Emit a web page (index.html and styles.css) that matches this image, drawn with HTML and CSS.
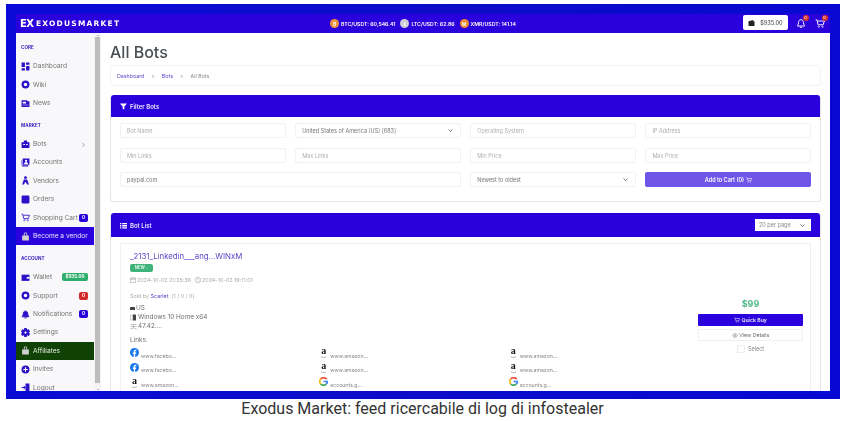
FILE: index.html
```html
<!DOCTYPE html>
<html lang="it">
<head>
  <meta charset="UTF-8" />
  <meta name="viewport" content="width=device-width, initial-scale=1.0"/>
  <title>Exodus Market</title>
  <link rel="stylesheet" href="styles.css">
</head>
<body>
  <svg class="sprite" width="0" height="0">
    <symbol id="cart" viewBox="0 0 16 16"><path d="M1 2h2l2 8h8l2-6H4" fill="none" stroke="currentColor" stroke-width="1.5"/><circle cx="6" cy="13" r="1.2" fill="none" stroke="currentColor"/><circle cx="12" cy="13" r="1.2" fill="none" stroke="currentColor"/></symbol>
    <symbol id="fb" viewBox="0 0 16 16"><circle cx="8" cy="8" r="8" fill="#1877f2"/><path d="M6.700 16v-5.500H5V8h1.700V6.300C6.700 4.300 7.900 3 9.800 3c.6 0 1.200.1 1.500.2v2.100h-1c-.9 0-1.200.5-1.200 1.100V8h2.100l-.4 2.500H9.100V16z" fill="#fff"/></symbol>
    <symbol id="goog" viewBox="0 0 16 16" fill="none" stroke-width="3"><path d="M13.500 4A7 7 0 0 0 3 3.500" stroke="#ea4335"/><path d="M3 3.500a7 7 0 0 0 0 9" stroke="#fbbc05"/><path d="M3 12.500a7 7 0 0 0 10 0" stroke="#34a853"/><path d="M13 12.500A7 7 0 0 0 15 8H8" stroke="#4285f4"/></symbol>
    <symbol id="amz" viewBox="0 0 16 16"><path d="M2 13c4 2.500 8 2.500 12 0" fill="none" stroke="#888" stroke-width="1.500"/></symbol>
  </svg>

  <div class="frame">
    <div class="app">
      <header class="topbar">
        <div class="logo"><span class="logo-mark">EX</span><span class="logo-text">EXODUSMARKET</span></div>
        <div class="ticker">
          <span class="coin coin-btc">₿</span><span>BTC/USDT: 60,546.41</span>
          <span class="coin coin-ltc">Ł</span><span>LTC/USDT: 62.86</span>
          <span class="coin coin-xmr">M</span><span>XMR/USDT: 141.14</span>
        </div>
        <div class="top-actions">
          <div class="balance">
            <svg width="7" height="6" viewBox="0 0 16 14"><path d="M1 3l11-3v3h3v11H1z" fill="#222"/></svg>
            <span>$935.00</span>
          </div>
          <div class="top-icon">
            <svg width="10" height="11" viewBox="0 0 16 16" fill="none" stroke="#fff" stroke-width="1.5"><path d="M8 2c-3 0-4 2-4 5 0 3-2 4-2 5h12c0-1-2-2-2-5 0-3-1-5-4-5zM6 14h4"/></svg>
            <span class="dot">0</span>
          </div>
          <div class="top-icon">
            <svg width="10" height="11"><use href="#cart"/></svg>
            <span class="dot">0</span>
          </div>
        </div>
      </header>

      <div class="body-row">
        <aside class="sidebar">
          <div class="side-label side-label-first">CORE</div>
          <a class="side-item"><svg class="ico" viewBox="0 0 16 16"><path d="M1 1h6v8H1zM9 1h6v4H9zM9 7h6v8H9zM1 11h6v4H1z"/></svg>Dashboard</a>
          <a class="side-item"><svg class="ico" viewBox="0 0 16 16"><circle cx="8" cy="8" r="7"/><circle cx="8" cy="8" r="3" fill="#fff"/></svg>Wiki</a>
          <a class="side-item"><svg class="ico" viewBox="0 0 16 16"><path d="M1 2h10v2h4v10H1z"/><path d="M3 5h6v3H3zM3 10h10v1H3z" fill="#fff"/></svg>News</a>

          <div class="side-label">MARKET</div>
          <a class="side-item"><svg class="ico" viewBox="0 0 16 16"><path d="M1 4h14v10H1zM5 1h6v3H5z"/><path d="M4 7h3v2H4zM9 7h3v2H9z" fill="#fff"/></svg>Bots<span class="chev">›</span></a>
          <a class="side-item"><svg class="ico" viewBox="0 0 16 16"><path d="M3 1h12v11H3zM1 4h1v11h11v-2H1z"/><circle cx="9" cy="5" r="2" fill="#fff"/><path d="M5.500 11c0-5 7-5 7 0z" fill="#fff"/></svg>Accounts</a>
          <a class="side-item"><svg class="ico" viewBox="0 0 16 16"><circle cx="8" cy="3" r="2.500"/><path d="M5 6h6l3 9h-3l-3-5-3 5H2z"/></svg>Vendors</a>
          <a class="side-item"><svg class="ico" viewBox="0 0 16 16"><rect x="1" y="1" width="14" height="14" rx="2"/></svg>Orders</a>
          <a class="side-item"><svg class="ico ico-line"><use href="#cart"/></svg>Shopping Cart<span class="badge badge-blue">0</span></a>
          <a class="side-item side-blue"><svg class="ico" viewBox="0 0 16 16"><path d="M2 6h12v9H2zM5 6V3c0-3 6-3 6 0v3H9.500V3c0-1-3-1-3 0v3z"/></svg>Become a vendor</a>

          <div class="side-label">ACCOUNT</div>
          <a class="side-item"><svg class="ico" viewBox="0 0 16 16"><path d="M1 3h14v11H1z"/><path d="M10 7h5v3h-5z" fill="#fff"/></svg>Wallet<span class="badge badge-green">$935.00</span></a>
          <a class="side-item"><svg class="ico" viewBox="0 0 16 16"><circle cx="8" cy="8" r="7"/><circle cx="8" cy="8" r="3" fill="#fff"/></svg>Support<span class="badge badge-red">0</span></a>
          <a class="side-item"><svg class="ico" viewBox="0 0 16 16" fill="none" stroke="#2a10c8" stroke-width="1.6"><path d="M8 2c-3 0-4 2-4 5 0 3-2 4-2 5h12c0-1-2-2-2-5 0-3-1-5-4-5zM6 14h4"/></svg>Notifications<span class="badge badge-blue">0</span></a>
          <a class="side-item"><svg class="ico" viewBox="0 0 16 16"><path d="M6 0h4l1 3 3-1 2 4-2 2 2 2-2 4-3-1-1 3H6l-1-3-3 1-2-4 2-2-2-2 2-4 3 1z"/><circle cx="8" cy="8" r="2" fill="#fff"/></svg>Settings</a>
          <a class="side-item side-green"><svg class="ico" viewBox="0 0 16 16"><path d="M2 6h12v9H2zM5 6V3c0-3 6-3 6 0v3H9.500V3c0-1-3-1-3 0v3z"/></svg>Affiliates</a>
          <a class="side-item"><svg class="ico" viewBox="0 0 16 16"><circle cx="8" cy="8" r="7"/><path d="M7 4h2v3h3v2H9v3H7V9H4V7h3z" fill="#fff"/></svg>Invites</a>
          <a class="side-item"><svg class="ico" viewBox="0 0 16 16"><path d="M8 1h7v14H8zM1 7h4V4l3 4-3 4V9H1z"/></svg>Logout</a>
        </aside>
        <div class="scrollbar"><span class="scroll-up"></span><span class="scroll-thumb"></span><span class="scroll-down"></span></div>

        <main class="main">
          <h1>All Bots</h1>
          <nav class="crumbs"><a>Dashboard</a><span>&gt;</span><a>Bots</a><span>&gt;</span><span>All Bots</span></nav>

          <section class="panel">
            <div class="panel-head">
              <svg width="7" height="7" viewBox="0 0 16 16" fill="#fff"><path d="M0 1h16l-6 7v7l-4-2V8z"/></svg>
              <span>Filter Bots</span>
            </div>
            <div class="filters">
              <div class="field">Bot Name</div>
              <div class="field field-select field-value">United States of America (US) [683]</div>
              <div class="field">Operating System</div>
              <div class="field">IP Address</div>
              <div class="field">Min Links</div>
              <div class="field">Max Links</div>
              <div class="field">Min Price</div>
              <div class="field">Max Price</div>
              <div class="field field-wide field-value">paypal.com</div>
              <div class="field field-select field-value">Newest to oldest</div>
              <button class="add-cart">Add to Cart (0) <svg width="6" height="6"><use href="#cart"/></svg></button>
            </div>
          </section>

          <section class="panel panel-list">
            <div class="panel-head panel-head-list">
              <svg width="7" height="7" viewBox="0 0 16 16" fill="#fff"><path d="M0 2h3v3H0zM5 2h11v3H5zM0 7h3v3H0zM5 7h11v3H5zM0 12h3v3H0zM5 12h11v3H5z"/></svg>
              <span>Bot List</span>
              <div class="per-page">20 per page</div>
            </div>
            <div class="bot-card">
              <div class="bot-info">
                <a class="bot-name">_2131_Linkedin___ang...WINxM</a>
                <div class="new-tag">NEW ◌</div>
                <div class="dates">
                  <span><svg width="6" height="6" viewBox="0 0 16 16" fill="none" stroke="#999" stroke-width="1.5"><path d="M1 3h14v12H1zM1 6h14M5 1v3M11 1v3"/></svg>2024-10-02 21:25:36</span>
                  <span><svg width="6" height="6" viewBox="0 0 16 16" fill="none" stroke="#999" stroke-width="1.5"><circle cx="8" cy="8" r="7"/><path d="M8 4v4l3 2"/></svg>2024-10-02 19:11:01</span>
                </div>
                <div class="seller">Sold by <a>Scarlet</a> &nbsp;(1 / 0 / 0)</div>
                <div class="spec"><svg width="5" height="5" viewBox="0 0 10 10"><path d="M0 2h10v6H0z" fill="#444"/></svg>US</div>
                <div class="spec"><svg width="7" height="7" viewBox="0 0 14 14"><path d="M1 2h4v10H1z" fill="none" stroke="#999"/><path d="M6 1h6v12H6z" fill="#444"/></svg>Windows 10 Home x64</div>
                <div class="spec"><svg width="7" height="7" viewBox="0 0 14 14" fill="none" stroke="#888"><path d="M1 3h12M1 7h12M1 11h5M9 11h4M7 3v8"/></svg>47.42....</div>
                <div class="links-label">Links:</div>
                <div class="links">
                  <div class="link"><svg class="link-ico"><use href="#fb"/></svg>www.facebo...</div>
                  <div class="link"><span class="amz">a<svg class="amz-smile"><use href="#amz"/></svg></span>www.amazon...</div>
                  <div class="link"><span class="amz">a<svg class="amz-smile"><use href="#amz"/></svg></span>www.amazon...</div>
                  <div class="link"><svg class="link-ico"><use href="#fb"/></svg>www.facebo...</div>
                  <div class="link"><span class="amz">a<svg class="amz-smile"><use href="#amz"/></svg></span>www.amazon...</div>
                  <div class="link"><span class="amz">a<svg class="amz-smile"><use href="#amz"/></svg></span>www.amazon...</div>
                  <div class="link"><span class="amz">a<svg class="amz-smile"><use href="#amz"/></svg></span>www.amazon...</div>
                  <div class="link"><svg class="link-ico"><use href="#goog"/></svg>accounts.g...</div>
                  <div class="link"><svg class="link-ico"><use href="#goog"/></svg>accounts.g...</div>
                </div>
              </div>
              <div class="bot-buy">
                <div class="price">$99</div>
                <button class="buy-btn"><svg width="6" height="6"><use href="#cart"/></svg> Quick Buy</button>
                <button class="view-btn"><svg width="6" height="5" viewBox="0 0 16 12" fill="none" stroke="#777" stroke-width="1.5"><path d="M1 6c4-6 10-6 14 0-4 6-10 6-14 0z"/><circle cx="8" cy="6" r="2"/></svg> View Details</button>
                <div class="select-row"><span class="check"></span>Select</div>
              </div>
            </div>
          </section>
        </main>
      </div>
    </div>
  </div>
  <p class="caption">Exodus Market: feed ricercabile di log di infostealer</p>
</body>
</html>
```

FILE: styles.css
```css
body {
  margin: 0;
  background: #fff;
  font-family: Inter, 'Liberation Sans', sans-serif;
  color: #555;
}
a { color: inherit; text-decoration: none; }
button { font-family: inherit; border: none; padding: 0; }
.sprite { position: absolute; }

.frame {
  width: 834px;
  height: 395px;
  margin: 4px 0 0 6px;
  padding: 10px 10px 8px;
  box-sizing: border-box;
  background: linear-gradient(100deg, #0a0ad8, #0c0cc8 50%, #0808d4);
}
.app {
  height: 100%;
  display: flex;
  flex-direction: column;
  background: #fff;
  overflow: hidden;
  filter: blur(0.5px);
}

/* top bar */
.topbar {
  height: 19px;
  flex: none;
  display: grid;
  grid-template-columns: 1fr auto 1fr;
  align-items: center;
  background: #2a00dc;
  color: #fff;
}
.logo { display: flex; align-items: center; padding-left: 4px; }
.logo-mark { font: bold 10px 'DejaVu Sans', sans-serif; width: 16px; letter-spacing: -0.5px; }
.logo-text { font: bold 7.5px 'DejaVu Sans', sans-serif; letter-spacing: 1.2px; }
.ticker { display: flex; align-items: center; gap: 2px; font-size: 5.2px; font-weight: 600; }
.ticker span:nth-child(2), .ticker span:nth-child(4) { margin-right: 3px; }
.coin {
  width: 9px;
  height: 9px;
  border-radius: 50%;
  display: flex;
  align-items: center;
  justify-content: center;
  font-size: 5px;
  color: #fff;
}
.coin-btc { background: #f0913a; }
.coin-ltc { background: #cfcfd8; }
.coin-xmr { background: #ee8a30; }
.top-actions { display: flex; align-items: center; justify-content: flex-end; padding-right: 0.5px; }
.balance {
  width: 45px;
  height: 15px;
  margin-right: 3.5px;
  margin-bottom: 2px;
  display: flex;
  align-items: center;
  justify-content: center;
  gap: 5px;
  background: #fff;
  border-radius: 2px;
  color: #555;
  font-size: 5.5px;
  font-weight: 500;
}
.top-icon { position: relative; width: 19px; height: 11px; display: flex; justify-content: center; color: #fff; }
.dot {
  position: absolute;
  top: -3px;
  right: 2px;
  width: 6px;
  height: 6px;
  border-radius: 50%;
  background: #d93030;
  font-size: 4px;
  line-height: 6px;
  text-align: center;
}

.body-row { flex: 1; min-height: 0; display: flex; }

/* sidebar */
.sidebar {
  width: 78px;
  flex: none;
  overflow: hidden;
  background: #f8f8fa;
  font-size: 6.6px;
  color: #737373;
}
.side-label {
  height: 10px;
  margin-top: 8.5px;
  padding: 0 0 4px 5px;
  font-size: 4.6px;
  font-weight: 700;
  line-height: 10px;
  color: #3a20c0;
}
.side-label-first { margin-top: 10px; }
.side-item {
  height: 18.45px;
  display: flex;
  align-items: center;
  padding: 0 6px 0 5px;
  box-sizing: border-box;
}
.ico { width: 9px; height: 9px; margin-right: 3px; flex: none; fill: #2a10c8; }
.ico-line { color: #2a10c8; }
.chev { margin-left: auto; margin-right: 3px; color: #999; font-size: 8px; }
.side-blue { background: #2a00dc; color: #e8e8ff; }
.side-green { background: #0f4204; color: #e8f0e4; }
.side-blue .ico, .side-green .ico { fill: #cfcfcf; }
.badge {
  margin-left: auto;
  height: 8px;
  min-width: 9px;
  padding: 0 1px;
  box-sizing: border-box;
  border-radius: 2px;
  color: #fff;
  font-size: 4.5px;
  font-weight: 700;
  line-height: 8px;
  text-align: center;
}
.badge-blue { background: #2a00dc; }
.badge-red { background: #d42a2a; }
.badge-green { background: #2fae6b; width: 26px; }

.scrollbar {
  width: 7px;
  flex: none;
  display: flex;
  flex-direction: column;
  align-items: center;
  background: #f4f4f4;
}
.scroll-up, .scroll-down {
  height: 0;
  margin: 2px 0 1px;
  flex: none;
  border: 1.5px solid transparent;
}
.scroll-up { border-top: none; border-bottom-color: #777; }
.scroll-down { border-bottom: none; border-top-color: #777; }
.scroll-thumb { width: 5px; flex: 1; margin-bottom: 4px; background: #bdbdbd; }

/* main */
.main { flex: 1; min-width: 0; padding: 8px 9px 0 9px; overflow: hidden; }
h1 {
  margin: 0 0 2px;
  font-size: 16px;
  font-weight: 500;
  line-height: 22px;
  color: #4a4f55;
}
.crumbs {
  height: 21px;
  display: flex;
  align-items: center;
  gap: 7px;
  padding-left: 6px;
  margin-bottom: 9px;
  border: 1px solid #f3f3f5;
  border-radius: 3px;
  box-sizing: border-box;
  font-size: 5.3px;
  color: #888;
}
.crumbs a { color: #5a46c8; }

.panel {
  height: 107px;
  margin-bottom: 11px;
  border: 1px solid #e6e6ea;
  border-top: none;
  border-radius: 3px;
  box-sizing: border-box;
}
.panel-list { height: auto; margin-bottom: 0; border-bottom: none; }
.panel-head {
  height: 22px;
  display: flex;
  align-items: center;
  gap: 3px;
  padding-left: 9px;
  background: #2a00dc;
  border-radius: 3px 3px 0 0;
  color: #e8e8ff;
  font-size: 6px;
  font-weight: 600;
}
.panel-head-list { height: 24px; }
.per-page {
  width: 56px;
  height: 12px;
  margin-left: auto;
  margin-right: 9px;
  padding-left: 4px;
  box-sizing: border-box;
  background: #fff url("data:image/svg+xml,%3Csvg xmlns='http://www.w3.org/2000/svg' width='5' height='3' viewBox='0 0 10 6'%3E%3Cpath d='M1 1l4 4 4-4' fill='none' stroke='%23555' stroke-width='1.5'/%3E%3C/svg%3E") no-repeat right 6px center;
  color: #888;
  font-size: 5.5px;
  font-weight: 400;
  line-height: 12px;
}
.filters {
  display: grid;
  grid-template-columns: repeat(4, 1fr);
  gap: 9.5px;
  padding: 6px 9px 0;
}
.field {
  height: 15px;
  padding-left: 6px;
  box-sizing: border-box;
  border: 1px solid #f2f2f4;
  border-radius: 2px;
  color: #b0b0b0;
  font-size: 5.5px;
  line-height: 14px;
}
.field-wide { grid-column: span 2; }
.field-value { color: #777; }
.field-select {
  background: url("data:image/svg+xml,%3Csvg xmlns='http://www.w3.org/2000/svg' width='5' height='3' viewBox='0 0 10 6'%3E%3Cpath d='M1 1l4 4 4-4' fill='none' stroke='%23555' stroke-width='1.5'/%3E%3C/svg%3E") no-repeat right 7px center;
}
.add-cart {
  height: 15px;
  background: #6f55e8;
  border-radius: 2px;
  color: #fff;
  font-size: 5.5px;
  font-weight: 600;
}
.add-cart svg, .buy-btn svg, .view-btn svg { vertical-align: -1px; }

/* bot card */
.bot-card {
  display: flex;
  margin: 6px 9px 0;
  height: 160px;
  padding: 7px 7px 0 9px;
  box-sizing: border-box;
  border: 1px solid #f0f0f2;
  border-bottom: none;
}
.bot-info { flex: 1; min-width: 0; }
.bot-name { display: block; color: #5a46c8; font-size: 7.8px; line-height: 10px; }
.new-tag {
  width: 23px;
  height: 8px;
  margin-top: 3px;
  background: #3fb27a;
  border-radius: 2px;
  color: #dff5e8;
  font-size: 4.2px;
  font-weight: 700;
  line-height: 8px;
  text-align: center;
}
.dates { display: flex; gap: 4px; margin-top: 4px; color: #aaa; font-size: 5.4px; line-height: 8px; }
.dates svg { margin-right: 1px; vertical-align: -1px; }
.seller { margin-top: 8px; margin-bottom: 3.5px; color: #aaa; font-size: 5.4px; line-height: 8px; }
.seller a { color: #5a46c8; }
.spec { display: flex; align-items: center; gap: 1px; color: #707070; font-size: 6.4px; line-height: 9.3px; }
.links-label { margin-top: 4.5px; color: #707070; font-size: 6.4px; line-height: 9px; }
.links { display: grid; grid-template-columns: repeat(3, 1fr); }
.link {
  height: 14.8px;
  display: flex;
  align-items: flex-end;
  color: #888;
  font-size: 5.2px;
  line-height: 7px;
}
.link-ico { width: 9px; height: 9px; margin-right: 2px; align-self: center; flex: none; }
.amz {
  position: relative;
  width: 9px;
  height: 10px;
  margin-right: 2px;
  align-self: center;
  flex: none;
  color: #111;
  font-family: 'Liberation Serif', serif;
  font-size: 10px;
  font-weight: 700;
  line-height: 8px;
  text-align: center;
}
.amz-smile { position: absolute; left: 1px; bottom: -1px; width: 7px; height: 7px; }

.bot-buy { width: 105px; flex: none; padding-top: 47px; display: flex; flex-direction: column; align-items: stretch; }
.price { text-align: center; color: #4db884; font-size: 9px; font-weight: 700; line-height: 12px; margin-bottom: 4px; }
.buy-btn { height: 12px; background: #2a00dc; border-radius: 1px; color: #e8e8ff; font-size: 5.2px; font-weight: 600; }
.view-btn { height: 12px; margin-top: 3px; background: #fff; border: 1px solid #f0f0f2; color: #666; font-size: 5.2px; }
.select-row { margin-top: 3px; display: flex; align-items: center; justify-content: center; gap: 3px; color: #888; font-size: 5.5px; line-height: 10px; }
.check { width: 6px; height: 6px; border: 1px solid #eee; }

.caption {
  margin: 1px 0 0;
  padding-right: 4px;
  text-align: center;
  font-family: Roboto, sans-serif;
  font-size: 16px;
  line-height: 18px;
  color: #333;
}
```
